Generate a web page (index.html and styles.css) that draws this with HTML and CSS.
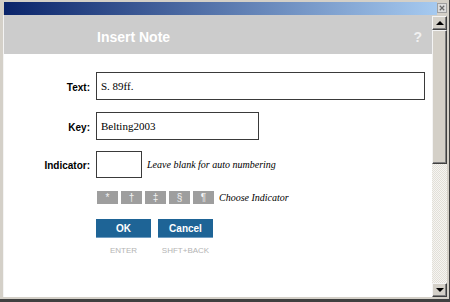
FILE: index.html
```html
<!DOCTYPE html>
<html>
<head>
<meta charset="utf-8">
<link rel="stylesheet" href="styles.css">
</head>
<body>
<div class="win">
  <div class="titlebar">
    <div class="grad"></div>
    <div class="close">
      <svg width="9" height="9" viewBox="0 0 9 9"><path d="M2 2 L7 7 M7 2 L2 7" stroke="#6b6b6b" stroke-width="1.4"/></svg>
    </div>
  </div>
  <div class="main">
    <div class="page">
      <div class="header">
        <h1 class="title">Insert Note</h1>
        <span class="help">?</span>
      </div>
      <div class="form">
        <div class="row row-text">
          <label class="lbl">Text:</label>
          <input class="inp inp-text" type="text" value="S. 89ff.">
        </div>
        <div class="row row-key">
          <label class="lbl">Key:</label>
          <input class="inp inp-key" type="text" value="Belting2003">
        </div>
        <div class="row row-ind">
          <label class="lbl">Indicator:</label>
          <input class="inp inp-ind" type="text" value="">
          <span class="hint">Leave blank for auto numbering</span>
        </div>
        <div class="row row-chips">
          <span class="lbl"></span>
          <div class="chips">
            <span class="chip">*</span><span class="chip">†</span><span class="chip">‡</span><span class="chip">§</span><span class="chip">¶</span>
          </div>
          <span class="hint hint-choose">Choose Indicator</span>
        </div>
        <div class="row row-actions">
          <span class="lbl"></span>
          <div class="actions">
            <div class="action"><button class="btn">OK</button><span class="key">ENTER</span></div>
            <div class="action"><button class="btn">Cancel</button><span class="key">SHFT+BACK</span></div>
          </div>
        </div>
      </div>
    </div>
    <div class="scrollbar">
      <div class="sbtn"><span class="arr up"></span></div>
      <div class="thumb"></div>
      <div class="track"></div>
      <div class="sbtn"><span class="arr down"></span></div>
    </div>
  </div>
</div>
</body>
</html>
```
FILE: styles.css
```css
* { box-sizing: border-box; }
html, body { margin: 0; padding: 0; }
body { width: 450px; height: 302px; overflow: hidden; background: #d4d0c8; }
.win {
  width: 450px; height: 302px;
  background: #d4d0c8;
  padding: 2px 2px 2px 3px;
  border-right: 1px solid #404040;
  border-bottom: 3px solid #404040;
  display: flex; flex-direction: column;
}
.titlebar { display: flex; height: 13px; margin-left: 1px; }
.grad { flex: 1; background: linear-gradient(to right, #0a246a, #a6caf0); }
.close {
  width: 10px; height: 10px; margin: 1px 0 0 0;
  background: #dcdcdc; border: 1px solid #a0a0a0;
  display: flex; align-items: center; justify-content: center;
}
.close svg { display: block; width: 8px; height: 8px; }
.main { flex: 1; display: flex; border-left: 1px solid #f4f4f4; }
.page { width: 428px; background: #fff; display: flex; flex-direction: column; }
.header {
  height: 39px; background: #cccccc;
  display: flex; align-items: center; justify-content: space-between;
  padding: 4px 10px 0 93px;
}
.title { margin: 0; font: bold 14px "Liberation Sans", Arial, sans-serif; color: #fff; }
.help { font: bold 14px "Liberation Sans", Arial, sans-serif; color: #f0f0f0; }
.form {
  display: flex; flex-direction: column;
  padding-top: 18px;
  font-family: "Liberation Sans", Arial, sans-serif;
}
.row { display: flex; align-items: center; gap: 6px; }
.row-text { margin-bottom: 12px; }
.row-key { margin-bottom: 11px; }
.row-ind { margin-bottom: 13px; }
.row-chips { margin-bottom: 15px; }
.row-actions { align-items: flex-start; }
.lbl { width: 86px; flex: none; font-weight: bold; font-size: 10px; text-align: right; color: #000; padding-top: 2px; }
.inp {
  height: 28px; border: 1px solid #3a3a3a; padding: 0 0 0 4px; margin: 0;
  font: 11px "Liberation Serif", "Times New Roman", serif; color: #000;
  background: #fff; outline: none;
}
.inp-text { width: 329px; }
.inp-key { width: 163px; }
.inp-ind { width: 46px; height: 27px; }
.hint { font: italic 10px "Liberation Serif", "Times New Roman", serif; color: #000; margin-left: -1px; }
.chips { display: flex; gap: 3px; margin-left: 1px; }
.chip {
  width: 21px; height: 13px; background: #9e9e9e; color: #f2f2f2;
  font: 10px "Liberation Sans", Arial, sans-serif;
  display: flex; align-items: center; justify-content: center;
}
.hint-choose { margin-left: -1px; }
.actions { display: flex; gap: 7px; }
.action { display: flex; flex-direction: column; align-items: center; width: 55px; }
.btn {
  width: 55px; height: 19px; margin: 0; padding: 0;
  background: #1e6496; border: none; border-bottom: 1px solid #6f9cc0;
  color: #fff; font: bold 10px "Liberation Sans", Arial, sans-serif;
}
.key { margin-top: 8px; font: 8px "Liberation Sans", Arial, sans-serif; color: #b4b4b4; }
.scrollbar { width: 15px; display: flex; flex-direction: column; padding-top: 1px; }
.sbtn, .thumb {
  background: #d4d0c8;
  border: 1px solid; border-color: #f4f4f4 #404040 #404040 #f4f4f4;
  box-shadow: inset -1px -1px #808080;
}
.sbtn { height: 14px; display: flex; align-items: center; justify-content: center; }
.thumb { height: 134px; }
.track {
  flex: 1;
  background: repeating-conic-gradient(#f6f5f2 0 25%, #e2dfd8 0 50%) 0 0 / 2px 2px;
}
.arr { width: 0; height: 0; border-left: 4px solid transparent; border-right: 4px solid transparent; }
.arr.up { border-bottom: 4px solid #000; }
.arr.down { border-top: 4px solid #000; }
```
